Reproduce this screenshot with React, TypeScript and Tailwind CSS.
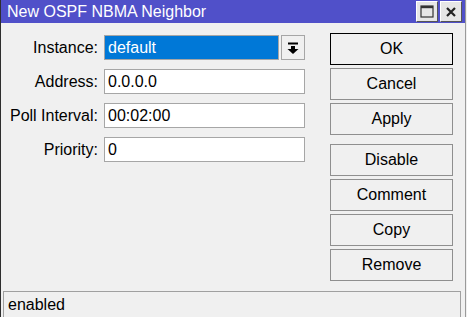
import React from 'react'

const font = { fontFamily: '"Liberation Sans", Arial, sans-serif' }

function Field({ label, value, selected, dropdown }: { label: string; value: string; selected?: boolean; dropdown?: boolean }) {
    return (
        <div className="flex items-center h-[25px]">
            <div className="w-[98px] pr-[1px] text-right text-[16px] text-black leading-none">{label}</div>
            <div className="ml-[5px] flex flex-1 h-full">
                <div
                    className={
                        selected
                            ? 'flex items-center flex-1 h-full border border-[#a6a6a6] bg-[#0078d7] text-white px-[3px] text-[16px] leading-none'
                            : 'flex items-center flex-1 h-full border border-[#a6a6a6] bg-white text-black px-[3px] text-[16px] leading-none'
                    }
                >
                    {value}
                </div>
                {dropdown && (
                    <div className="ml-[2px] w-[24px] h-full flex items-center justify-center border border-[#a6a6a6] bg-[#f0f0f0]">
                        <svg width="14" height="14" viewBox="0 0 14 14">
                            <rect x="2" y="1.5" width="10" height="2" fill="#000" />
                            <rect x="5" y="5" width="4" height="3" fill="#000" />
                            <path d="M1.5 8 L12.5 8 L7 13 Z" fill="#000" />
                        </svg>
                    </div>
                )}
            </div>
        </div>
    )
}

function Btn({ children, primary, className = '' }: { children: React.ReactNode; primary?: boolean; className?: string }) {
    return (
        <div
            className={
                (primary ? 'border-black ' : 'border-[#8f8f8f] ') +
                'h-[32px] w-[123px] flex items-center justify-center border bg-[#f0f0f0] text-[16px] text-black leading-none ' +
                className
            }
        >
            {children}
        </div>
    )
}

export default function App() {
    return (
        <div className="w-[467px] h-[317px] bg-[#f0f0f0] overflow-hidden" style={font}>
            <div className="w-[466px] h-full flex flex-col border-l border-[#2e2e2e] border-r border-r-[#9a9a9a] bg-[#f0f0f0]">
                <div className="h-[23px] flex items-center bg-[#5050c9] pl-[6px] pr-[3px]">
                    <div className="flex-1 text-[16px] text-white leading-none">New OSPF NBMA Neighbor</div>
                    <div className="flex gap-[2px] self-start mt-[1px]">
                        <div className="w-[22px] h-[21px] flex items-center justify-center bg-[#e6e6e6] border border-t-white border-l-white border-b-[#555] border-r-[#555]">
                            <svg width="14" height="13" viewBox="0 0 14 13">
                                <rect x="1" y="1" width="12" height="11" fill="none" stroke="#333" strokeWidth="1.2" />
                                <rect x="1" y="1" width="12" height="2.2" fill="#333" />
                            </svg>
                        </div>
                        <div className="w-[22px] h-[21px] flex items-center justify-center bg-[#e6e6e6] border border-t-white border-l-white border-b-[#555] border-r-[#555]">
                            <svg width="12" height="12" viewBox="0 0 12 12">
                                <path d="M2 2 L10 10 M10 2 L2 10" stroke="#222" strokeWidth="2.2" />
                            </svg>
                        </div>
                    </div>
                </div>
                <div className="flex flex-1">
                    <div className="flex flex-col gap-[9px] pt-[12px] w-[304px]">
                        <Field label="Instance:" value="default" selected dropdown />
                        <Field label="Address:" value="0.0.0.0" />
                        <Field label="Poll Interval:" value="00:02:00" />
                        <Field label="Priority:" value="0" />
                    </div>
                    <div className="flex flex-col gap-[3px] pt-[10px] ml-[25px]">
                        <Btn primary>OK</Btn>
                        <Btn>Cancel</Btn>
                        <Btn>Apply</Btn>
                        <Btn className="mt-[6px]">Disable</Btn>
                        <Btn>Comment</Btn>
                        <Btn>Copy</Btn>
                        <Btn>Remove</Btn>
                    </div>
                </div>
                <div className="h-[26px] ml-[2px] mr-[4px] flex items-center border-t border-l border-r border-[#a0a0a0] pl-[4px] text-[16px] text-black leading-none">
                    enabled
                </div>
            </div>
        </div>
    )
}
